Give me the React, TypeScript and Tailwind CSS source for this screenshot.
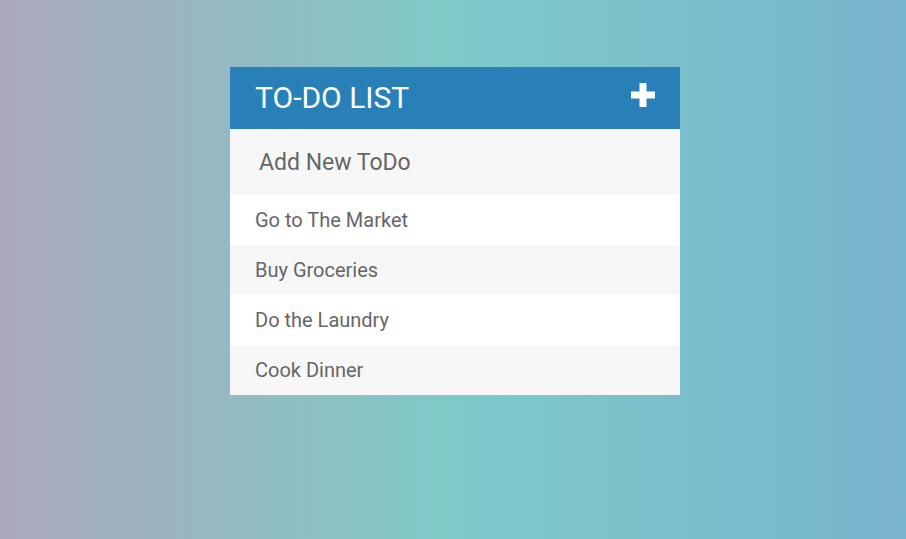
import React from 'react';

const todos = ['Go to The Market', 'Buy Groceries', 'Do the Laundry', 'Cook Dinner'];

export default function App() {
  return (
    <div
      className="min-h-[539px] w-full bg-[linear-gradient(to_right,#aba8bc_0%,#7ecac8_50%,#78b4ce_100%)] pt-[67px]"
      style={{ fontFamily: 'Roboto, "Liberation Sans", sans-serif' }}
    >
      <div className="mx-auto w-[450px] translate-x-[2px]">
        <div className="flex h-[62px] items-center justify-between bg-[#2980b9] pl-[25px] pr-[25px]">
          <h1 className="text-[30px] font-normal leading-none text-white">TO-DO LIST</h1>
          <svg width="24" height="24" viewBox="0 0 24 24" className="-mt-[7px]">
            <path d="M8.5 0h7v8.5H24v7h-8.5V24h-7v-8.5H0v-7h8.5z" fill="#fff" />
          </svg>
        </div>
        <input
          type="text"
          placeholder="Add New ToDo"
          className="block h-[66px] w-full bg-[#f7f7f7] px-[29px] text-[23px] text-[#666] placeholder:text-[#666] outline-none"
        />
        <ul>
          {todos.map((todo, i) => (
            <li
              key={todo}
              className={`flex h-[50px] items-center px-[25px] text-[20px] text-[#666] ${
                i % 2 === 0 ? 'bg-white' : 'bg-[#f7f7f7]'
              }`}
            >
              {todo}
            </li>
          ))}
        </ul>
      </div>
    </div>
  );
}
